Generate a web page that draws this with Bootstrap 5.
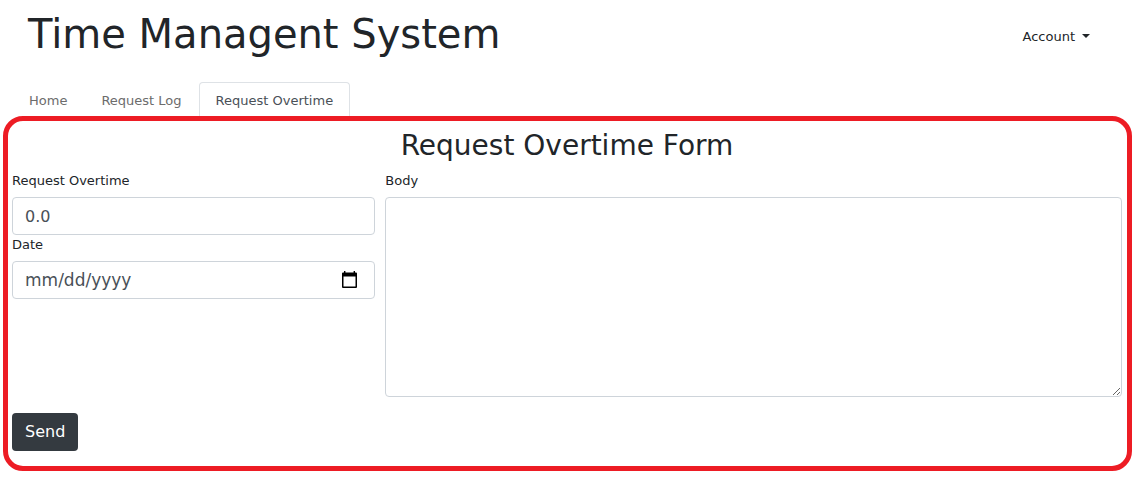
<!DOCTYPE html>
<html lang="en">
<head>
<meta charset="utf-8">
<meta name="viewport" content="width=device-width, initial-scale=1">
<title>Time Managent System</title>
<link href="https://cdn.jsdelivr.net/npm/bootstrap@5.3.0/dist/css/bootstrap.min.css" rel="stylesheet">
<style>
body{font-family:Verdana,"DejaVu Sans","Noto Sans",sans-serif;font-size:13px;line-height:20px;color:#212529}
.site-title{font-size:40px;line-height:48px;font-weight:400;padding-top:10px}
.account-btn{font-size:13px;line-height:20px;color:#212529}
.account-btn.dropdown-toggle::after{margin-left:7px;border-width:4px 4px 0}
.nav-tabs{border-bottom:0}
.nav-tabs .nav-link{color:#6c6c6c;padding:8px 16px 5px;margin-bottom:0;border-bottom:0;border-radius:4px 4px 0 0}
.nav-tabs .nav-link.active{color:#495057}
.form-frame{border:5px solid #ed1c24;border-radius:20px;margin:0 3px;padding:8px 5px 15px 4px}
.form-title{font-size:28px;line-height:34px;font-weight:400}
.form-row{--bs-gutter-x:10px}
.form-label{margin-bottom:6px;display:block}
.form-control{font-size:16px;line-height:24px;color:#495057;border-color:#ced4da;border-radius:4px}
.line-field{height:38px}
.date-field{font-size:17px}
.date-field::-webkit-calendar-picker-indicator{width:17px;height:18px;padding:0;margin-right:4px;background:top/17px 17px no-repeat url("data:image/svg+xml,%3Csvg xmlns='http://www.w3.org/2000/svg' viewBox='0 0 17 17'%3E%3Cpath fill='%23000' fill-rule='evenodd' d='M3 0h1.4v1.5h8.2V0H14v1.5h1q1 0 1 1V16q0 1-1 1H2q-1 0-1-1V2.500q0-1 1-1h1zM2.500 5.500v10h12v-10z'/%3E%3C/svg%3E")}
.body-field{height:200px}
.btn-send,.btn-send:hover{font-size:16px;line-height:24px;background:#343a40;color:#fff;border-radius:4px}
</style>
</head>
<body>
<header class="d-flex justify-content-between align-items-center px-4">
<h1 class="site-title mb-0 ms-1">Time Managent System</h1>
<div class="dropdown pt-3 me-2">
<button class="btn account-btn dropdown-toggle" type="button" data-bs-toggle="dropdown" aria-expanded="false">Account</button>
</div>
</header>
<ul class="nav nav-tabs mt-4 px-2 mx-1">
<li class="nav-item"><a class="nav-link" href="#">Home</a></li>
<li class="nav-item"><a class="nav-link" href="#">Request Log</a></li>
<li class="nav-item"><a class="nav-link active" href="#" aria-current="page">Request Overtime</a></li>
</ul>
<main class="form-frame">
<h2 class="form-title text-center mb-2">Request Overtime Form</h2>
<form>
<div class="row form-row">
<div class="col-4">
<label class="form-label" for="hours">Request Overtime</label>
<input class="form-control line-field" id="hours" type="text" inputmode="decimal" value="0.0">
<label class="form-label" for="day">Date</label>
<input class="form-control line-field date-field" id="day" type="date">
</div>
<div class="col-8">
<label class="form-label" for="message">Body</label>
<textarea class="form-control body-field" id="message"></textarea>
</div>
</div>
<button class="btn btn-send mt-3" type="submit">Send</button>
</form>
</main>
<script src="https://cdn.jsdelivr.net/npm/bootstrap@5.3.0/dist/js/bootstrap.bundle.min.js"></script>
</body>
</html>
